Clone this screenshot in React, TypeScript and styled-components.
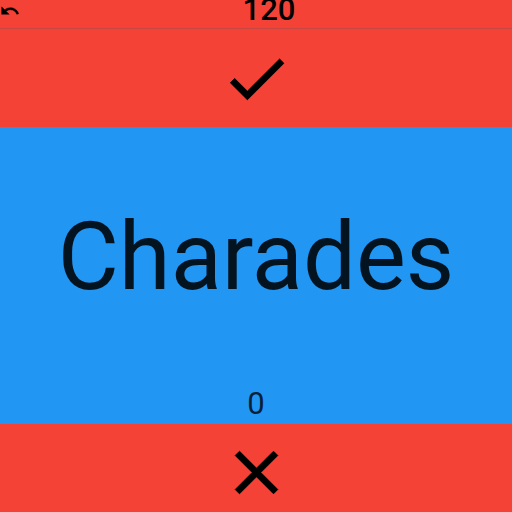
import React, { useState } from "react";
import styled, { createGlobalStyle } from "styled-components";

const GlobalStyle = createGlobalStyle`
  *, *::before, *::after { box-sizing: border-box; }
  body { margin: 0; background: #f44336; font-family: Roboto, sans-serif; }
`;

const Screen = styled.main`
  display: flex;
  flex-direction: column;
  min-height: 100vh;
`;

const TopBar = styled.header`
  display: flex;
  align-items: flex-start;
  height: 29px;
  overflow: hidden;
  background: #f44336;
  border-bottom: 1px solid #c84743;
`;

const PlainButton = styled.button`
  display: flex;
  justify-content: center;
  align-items: center;
  margin: 0;
  padding: 0;
  border: 0;
  color: #000;
  background: #f44336;
  cursor: pointer;
`;

const UndoButton = styled(PlainButton)`
  justify-content: flex-start;
  width: 26px;
  padding-top: 1px;
`;

const AnswerButton = styled(PlainButton)<{ $height: number }>`
  flex: none;
  width: 100%;
  height: ${(p) => p.$height}px;
  padding-top: ${(p) => 96 - p.$height}px;
`;

const CorrectButton = styled(AnswerButton)`
  padding-top: 0;
`;

const Timer = styled.output`
  flex: 1;
  text-align: center;
  font-size: 31px;
  font-weight: 500;
  line-height: 20px;
  color: #000;
`;

const Card = styled.section`
  flex: 1;
  display: flex;
  flex-direction: column;
  align-items: center;
  background: #2196f3;
`;

const Word = styled.h1`
  flex: 1;
  display: flex;
  align-items: center;
  margin: 0;
  font-size: 94px;
  font-weight: 400;
  line-height: 112px;
  color: rgba(0, 0, 0, 0.87);
`;

const Score = styled.output`
  padding-bottom: 2px;
  font-size: 31px;
  line-height: 36px;
  color: rgba(0, 0, 0, 0.8);
`;

const Icon = ({ size, path, weight }: { size: number; path: string; weight: number }) => (
  <svg
    width={size}
    height={size}
    viewBox="0 0 24 24"
    fill="currentColor"
    stroke="currentColor"
    strokeWidth={weight}
    aria-hidden="true"
  >
    <path d={path} />
  </svg>
);

const UNDO =
  "M12.5 8c-2.65 0-5.05.99-6.9 2.6L2 7v9h9l-3.62-3.62c1.39-1.16 3.16-1.88 5.12-1.88 3.54 0 6.55 2.31 7.6 5.5l2.37-.78C21.08 11.03 17.15 8 12.5 8z";
const CHECK = "M9 16.17 4.83 12l-1.42 1.41L9 19 21 7l-1.41-1.41z";
const CLOSE =
  "M19 6.41 17.59 5 12 10.59 6.41 5 5 6.41 10.59 12 5 17.59 6.41 19 12 13.41 17.59 19 19 17.59 13.41 12z";

export default function App() {
  const [history, setHistory] = useState<number[]>([]);
  const score = history.reduce((sum, n) => sum + n, 0);

  return (
    <>
      <GlobalStyle />
      <Screen>
        <TopBar>
          <UndoButton type="button" aria-label="Undo" onClick={() => setHistory((h) => h.slice(0, -1))}>
            <Icon size={20} path={UNDO} weight={0.5} />
          </UndoButton>
          <Timer aria-label="Seconds left">120</Timer>
        </TopBar>
        <CorrectButton type="button" $height={98} aria-label="Correct" onClick={() => setHistory((h) => [...h, 1])}>
          <Icon size={73} path={CHECK} weight={0.3} />
        </CorrectButton>
        <Card>
          <Word>Charades</Word>
          <Score aria-label="Score">{score}</Score>
        </Card>
        <AnswerButton type="button" $height={88} aria-label="Skip" onClick={() => setHistory((h) => [...h, 0])}>
          <Icon size={73} path={CLOSE} weight={0.3} />
        </AnswerButton>
      </Screen>
    </>
  );
}
